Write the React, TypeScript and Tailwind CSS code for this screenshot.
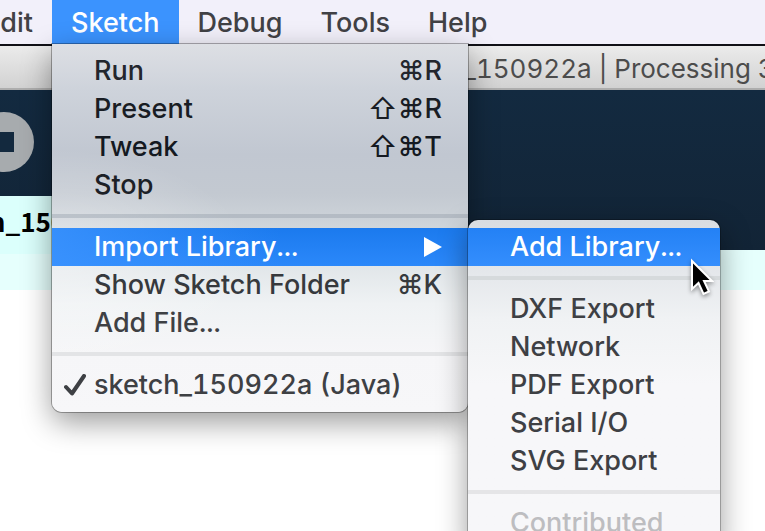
import type { ReactNode } from "react";

const FONT = "font-['Inter','DejaVu_Sans',sans-serif]";

function MenuItem({
  label,
  shortcut,
  shift = false,
  tone = "text-[#3e4044]",
  active,
  checked = false,
  disabled = false,
  arrow = false,
}: {
  label: string;
  shortcut?: string;
  shift?: boolean;
  tone?: string;
  active?: string;
  checked?: boolean;
  disabled?: boolean;
  arrow?: boolean;
}) {
  const look = active ? `${active} text-white` : tone;
  return (
    <button
      type="button"
      role="menuitem"
      disabled={disabled}
      className={`flex h-[38px] w-full items-center pr-[26px] text-left whitespace-nowrap ${look}`}
    >
      <span className="flex w-[42px] shrink-0 items-center pl-3">
        {checked && (
          <svg viewBox="0 0 22 22" className="size-[22px]" fill="none" stroke="currentColor" strokeWidth="4" strokeLinecap="round" strokeLinejoin="round">
            <path d="M2 13 L8 19.500 L20 2" />
          </svg>
        )}
      </span>
      <span className="grow">{label}</span>
      {shortcut && (
        <kbd className={`flex items-center ${FONT}`}>
          {shift && <span className="text-[29px] font-normal">⇧</span>}
          {shortcut}
        </kbd>
      )}
      {arrow && (
        <svg viewBox="0 0 18 20" className="h-5 w-[18px]" fill="currentColor">
          <path d="M0 0 L18 10 L0 20 Z" />
        </svg>
      )}
    </button>
  );
}

function Separator({ tone }: { tone: string }) {
  return (
    <div role="separator" className="flex h-6 items-center">
      <div className={`h-1 w-full ${tone}`} />
    </div>
  );
}

function LibrarySubmenu() {
  return (
    <div
      role="menu"
      className="absolute -top-2 left-full w-[252px] rounded-[10px] bg-linear-to-b from-[#d8dce1] via-[#f0f2f4] via-30% to-[#f7f7f9] to-50% py-2 shadow-[0_0_0_1px_rgba(0,0,0,0.25),0_10px_30px_rgba(0,0,0,0.4)]"
    >
      <MenuItem label="Add Library..." active="bg-linear-to-b from-[#2381f5] to-[#348efd]" />
      <Separator tone="bg-[#d6dadc]" />
      <MenuItem label="DXF Export" />
      <MenuItem label="Network" />
      <MenuItem label="PDF Export" />
      <MenuItem label="Serial I/O" />
      <MenuItem label="SVG Export" />
      <Separator tone="bg-[#e5e5e7]" />
      <MenuItem label="Contributed" disabled tone="text-[#bdbdc0]" />
      <svg
        viewBox="0 0 24 38"
        className="absolute top-[38px] left-[222px] h-[38px] w-6 drop-shadow-[0_2px_2px_rgba(0,0,0,0.4)]"
      >
        <path
          d="M2 3 V31 L8.500 25 L13.500 36 L19 33.500 L14 23 H22 Z"
          fill="#000"
          stroke="#fff"
          strokeWidth="2"
        />
      </svg>
    </div>
  );
}

function SketchMenu() {
  return (
    <div
      role="menu"
      className="absolute top-full left-0 z-10 w-[416px] rounded-b-[10px] bg-[radial-gradient(ellipse_200px_110px_at_0px_215px,rgba(255,255,255,0.4),transparent),linear-gradient(180deg,#dddfe4_0px,#ced3db_45px,#c1c7d1_110px,#c3c9d1_150px,#ccd2d8_175px,#e1e6e9_222px,#eff2f4_260px,#f6f6f8_310px,#f7f7f9_368px)] pt-2 pb-2 shadow-[0_0_0_1px_rgba(0,0,0,0.3),0_10px_30px_rgba(0,0,0,0.4)]"
    >
      <MenuItem label="Run" shortcut="⌘R" tone="text-[#23262d]" />
      <MenuItem label="Present" shortcut="⌘R" shift tone="text-[#191d24]" />
      <MenuItem label="Tweak" shortcut="⌘T" shift tone="text-[#141921]" />
      <MenuItem label="Stop" tone="text-[#1c2026]" />
      <Separator tone="bg-[#909ba7]/40" />
      <div className="relative">
        <MenuItem
          label="Import Library..."
          active="bg-[linear-gradient(90deg,rgba(60,148,255,0.8),transparent_55%),linear-gradient(180deg,#1b7aee,#2b88fa)]"
          arrow
        />
        <LibrarySubmenu />
      </div>
      <MenuItem label="Show Sketch Folder" shortcut="⌘K" tone="text-[#36393d]" />
      <MenuItem label="Add File..." />
      <Separator tone="bg-[#e3e4e6]" />
      <MenuItem label="sketch_150922a (Java)" checked />
    </div>
  );
}

function BarItem({ label, open = false, children }: { label: string; open?: boolean; children?: ReactNode }) {
  return (
    <div className="relative">
      <button
        type="button"
        className={`flex h-11 items-center px-[19px] pt-px ${open ? "bg-[#3b93fe] text-white" : "text-[#414145]"}`}
      >
        {label}
      </button>
      {children}
    </div>
  );
}

export default function App() {
  return (
    <div className={`h-screen overflow-hidden bg-white text-[27px] leading-8 font-medium tabular-nums ${FONT}`}>
      <nav className="-ml-[35px] flex border-b-2 border-[#101016] bg-[#f2f0fa]">
        <BarItem label="Edit" />
        <BarItem label="Sketch" open>
          <SketchMenu />
        </BarItem>
        <BarItem label="Debug" />
        <BarItem label="Tools" />
        <BarItem label="Help" />
      </nav>

      <main className="-ml-32">
        <header className="flex h-11 items-center border-b-2 border-[#adadad] bg-linear-to-b from-[#ebebeb] to-[#d2d2d2] pt-1 pl-[511px] text-[26px] font-normal whitespace-nowrap text-[#4c4c4c]">
          sketch_150922a | Processing 3.0
        </header>
        <div className="bg-linear-to-b from-[#132a40] to-[#122436]">
          <div className="h-[106px] pt-[22px] pl-[102px]">
            <button type="button" aria-label="Stop" className="flex size-[60px] items-center justify-center rounded-full bg-[#a7abae]">
              <span className="size-5 bg-[#13293e]" />
            </button>
          </div>
          <div className="flex h-[54px]">
            <button
              type="button"
              className="flex h-[58px] items-center bg-[#dbfffc] pr-6 pb-2 pl-[50px] font-['Noto_Sans_CJK_SC',sans-serif] text-[26px] font-bold text-black"
            >
              sketch_150922a
            </button>
          </div>
        </div>
        <div className="h-10 bg-[#e6fffd]" />
      </main>
    </div>
  );
}
